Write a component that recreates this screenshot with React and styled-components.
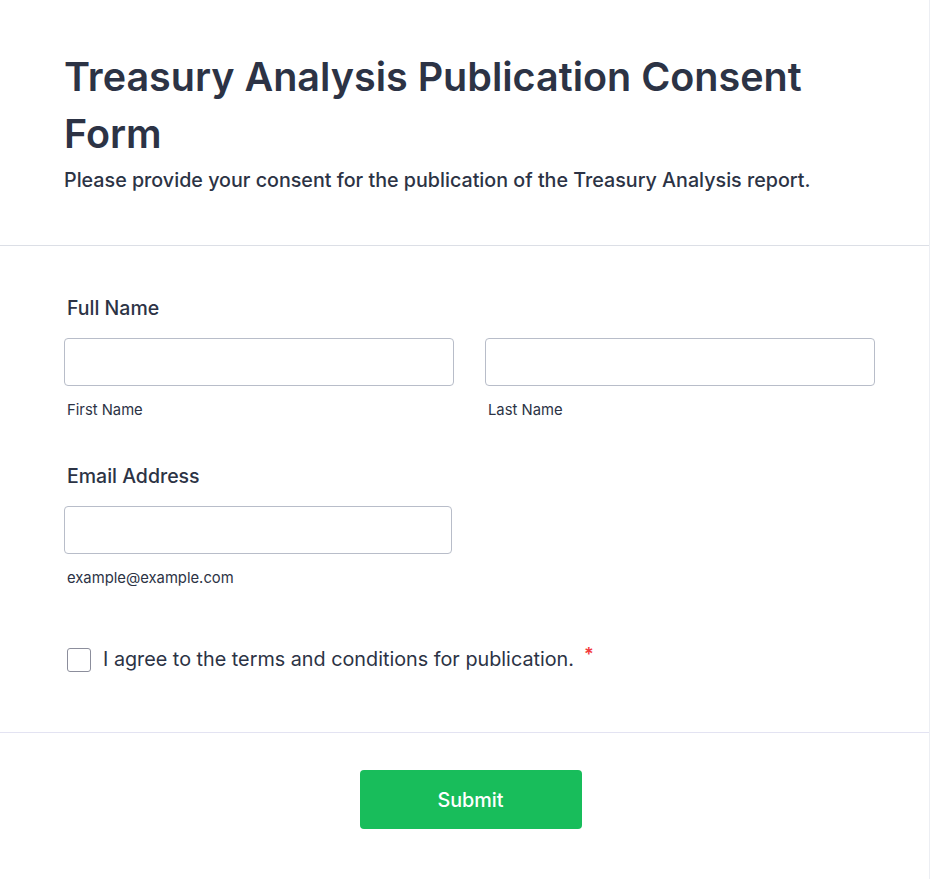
import React from 'react';
import styled, { createGlobalStyle } from 'styled-components';

const GlobalStyle = createGlobalStyle`
  * { box-sizing: border-box; }
  body {
    margin: 0;
    background: #fff;
    font-family: Inter, "Noto Sans", sans-serif;
    color: #2c3345;
  }
`;

const Card = styled.form`
  width: 930px;
  min-height: 879px;
  background: #fff;
  border-right: 1px solid #eceef3;
`;

const Header = styled.header`
  padding: 49px 64px 51px 64px;
  border-bottom: 1px solid #dcdfe6;
`;

const Title = styled.h1`
  margin: 0;
  font-size: 39.5px;
  line-height: 57px;
  font-weight: 600;
  color: #2c3345;
  max-width: 760px;
`;

const Subtitle = styled.p`
  margin: 4px 0 0;
  font-size: 19.7px;
  line-height: 27px;
  font-weight: 500;
  color: #2c3345;
`;

const Body = styled.div`
  padding: 48px 54px 60px 64px;
  border-bottom: 1px solid #e3e3f2;
  display: flex;
  flex-direction: column;
`;

const Field = styled.div`
  margin-bottom: ${(p) => p.$gap || 0}px;
`;

const Label = styled.label`
  display: block;
  margin: 0 0 16px 3px;
  font-size: 19.5px;
  line-height: 28px;
  font-weight: 500;
  color: #2c3345;
`;

const Row = styled.div`
  display: grid;
  grid-template-columns: ${(p) => p.$cols || '390px 390px'};
  column-gap: 31px;
`;

const Input = styled.input`
  display: block;
  width: 100%;
  height: 48px;
  border: 1px solid #b8bdc9;
  border-radius: 4px;
  background: #fff;
  padding: 0 12px;
  font: inherit;
  font-size: 16px;
  outline: none;
`;

const SubLabel = styled.span`
  display: block;
  margin: 14px 0 0 3px;
  font-size: 14.8px;
  line-height: 20px;
  color: #2c3345;
`;

const CheckRow = styled.label`
  display: flex;
  align-items: center;
  gap: 12px;
  margin-left: 3px;
  font-size: 19.8px;
  line-height: 24px;
  color: #2c3345;
  cursor: pointer;
`;

const Box = styled.span`
  width: 24px;
  height: 24px;
  border: 1.5px solid #8c8e9c;
  border-radius: 3px;
  background: #fff;
  flex: none;
`;

const Required = styled.span`
  color: #f23a3c;
  font-weight: 600;
  font-size: 18px;
  margin-left: 10px;
  position: relative;
  top: -5px;
`;

const Footer = styled.div`
  display: flex;
  justify-content: center;
  padding: 37px 0 50px 12px;
`;

const SubmitButton = styled.button`
  width: 222px;
  height: 59px;
  border: none;
  border-radius: 4px;
  background: #18bd5b;
  color: #fff;
  font-family: inherit;
  font-size: 19.8px;
  font-weight: 500;
  cursor: pointer;
`;

export default function App() {
  return (
    <>
      <GlobalStyle />
      <Card onSubmit={(e) => e.preventDefault()}>
        <Header>
          <Title>Treasury Analysis Publication Consent Form</Title>
          <Subtitle>
            Please provide your consent for the publication of the Treasury Analysis report.
          </Subtitle>
        </Header>
        <Body>
          <Field $gap={42}>
            <Label>Full Name</Label>
            <Row>
              <div>
                <Input type="text" />
                <SubLabel>First Name</SubLabel>
              </div>
              <div>
                <Input type="text" />
                <SubLabel>Last Name</SubLabel>
              </div>
            </Row>
          </Field>
          <Field $gap={59}>
            <Label>Email Address</Label>
            <Row $cols="388px">
              <div>
                <Input type="email" />
                <SubLabel>example@example.com</SubLabel>
              </div>
            </Row>
          </Field>
          <CheckRow>
            <Box />
            <span>
              I agree to the terms and conditions for publication.
              <Required>*</Required>
            </span>
          </CheckRow>
        </Body>
        <Footer>
          <SubmitButton type="submit">Submit</SubmitButton>
        </Footer>
      </Card>
    </>
  );
}
